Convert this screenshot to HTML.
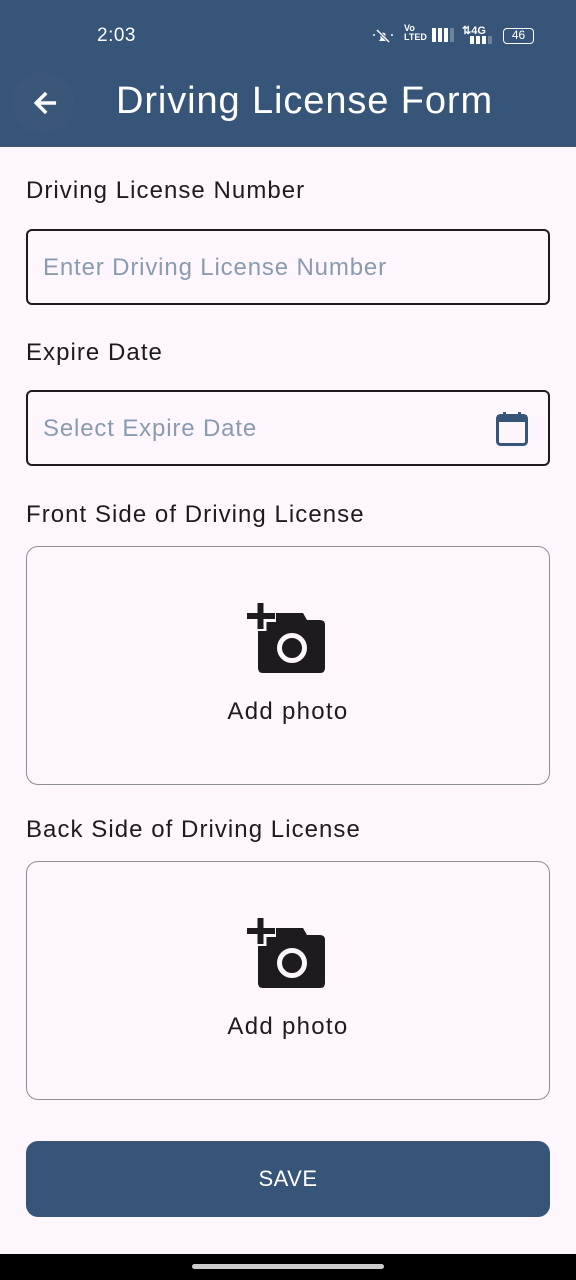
<!DOCTYPE html>
<html><head><meta charset="utf-8"><style>
*{margin:0;padding:0;box-sizing:border-box}
body{width:576px;height:1280px;background:#fdf7fd;font-family:"Liberation Sans",sans-serif;position:relative;overflow:hidden;color:#1d1b20}
.top{position:absolute;left:0;top:0;width:576px;height:147px;background:#375479;color:#fff}
.lbl{position:absolute;left:26px;font-size:24px;color:#1d1b20;letter-spacing:1.05px}
.field{position:absolute;left:26px;width:524px;height:76px;border:2px solid #1d1b20;border-radius:6px;font-size:24px;color:#8a9bb0;padding:23px 0 0 15px;letter-spacing:0.85px}
.box{position:absolute;left:26px;width:524px;height:239px;border:1.5px solid #8e8e95;border-radius:12px}
.box span{position:absolute;left:0;right:0;top:151px;text-align:center;font-size:24px;color:#1d1b20;letter-spacing:1.3px}
</style></head><body>
<div class="top">
<div style="position:absolute;left:97px;top:25px;font-size:19px;letter-spacing:0.5px">2:03</div>
<svg style="position:absolute;left:371px;top:26px" width="24" height="20"><path d="M8 15h8l-1.5-2V8a3 3 0 0 0-5 0v5z" fill="#fff"/><path d="M6 4l12 12" stroke="#375479" stroke-width="3"/><path d="M6 4l12 12" stroke="#fff" stroke-width="1.5"/><path d="M2 9h2M20 9h2" stroke="#fff" stroke-width="1.5"/></svg>
<div style="position:absolute;left:404px;top:24px;font-size:9px;line-height:9px;font-weight:bold">Vo<br>LTED</div>
<div style="position:absolute;left:432px;top:28px;width:22px;height:14px;background:linear-gradient(90deg,#fff 0 4px,transparent 4px 6px,#fff 6px 10px,transparent 10px 12px,#fff 12px 16px,transparent 16px 18px,#6d84a0 18px)"></div>
<div style="position:absolute;left:462px;top:24px;font-size:11px;font-weight:bold">⇅4G</div>
<div style="position:absolute;left:470px;top:36px;width:22px;height:8px;background:linear-gradient(90deg,#fff 0 4px,transparent 4px 6px,#fff 6px 10px,transparent 10px 12px,#fff 12px 16px,transparent 16px 18px,#6d84a0 18px)"></div>
<div style="position:absolute;left:503px;top:28px;width:31px;height:16px;border:1.5px solid #fff;border-radius:4px;font-size:12px;text-align:center;line-height:13px">46</div>
<div style="position:absolute;left:12px;top:72px;width:62px;height:62px;border-radius:50%;background:#3a5679"></div>
<svg style="position:absolute;left:29px;top:87px" width="32" height="32" viewBox="0 0 24 24"><path d="M20 11H7.8l5.6-5.6L12 4l-8 8 8 8 1.4-1.4L7.8 13H20z" fill="#fff" stroke="#fff" stroke-width="0.6"/></svg>
<div style="position:absolute;left:116px;top:80px;font-size:38px;letter-spacing:0.9px">Driving License Form</div>
</div>
<div class="lbl" style="top:177px">Driving License Number</div>
<div class="field" style="top:229px">Enter Driving License Number</div>
<div class="lbl" style="top:339px">Expire Date</div>
<div class="field" style="top:390px">Select Expire Date</div>
<svg style="position:absolute;left:494px;top:410px" width="36" height="38"><rect x="3.5" y="5.5" width="29" height="29" rx="3" fill="none" stroke="#375479" stroke-width="3"/><rect x="3" y="5" width="30" height="7" fill="#375479"/><rect x="9" y="2" width="3" height="6" fill="#375479"/><rect x="24" y="2" width="3" height="6" fill="#375479"/></svg>
<div class="lbl" style="top:501px">Front Side of Driving License</div>
<div class="box" style="top:546px"><span>Add photo</span></div>
<div class="lbl" style="top:816px">Back Side of Driving License</div>
<div class="box" style="top:861px"><span>Add photo</span></div>
<svg style="position:absolute;left:240px;top:598px" width="90" height="80"><g transform="translate(-240,-598)">
<path d="M258 622 Q258 613 266 613 L303 613 L307 620 L320 620 Q325 620 325 625 L325 668 Q325 673 320 673 L263 673 Q258 673 258 668Z" fill="#1d1b20"/>
<path d="M246 616 H276 M260.5 602 V631" stroke="#fdf7fd" stroke-width="12"/>
<path d="M247 616 H275 M260.5 603 V629" stroke="#1d1b20" stroke-width="6"/>
<circle cx="292" cy="648" r="12.5" fill="none" stroke="#fdf7fd" stroke-width="5"/></g></svg>
<svg style="position:absolute;left:240px;top:913px" width="90" height="80"><g transform="translate(-240,-598)">
<path d="M258 622 Q258 613 266 613 L303 613 L307 620 L320 620 Q325 620 325 625 L325 668 Q325 673 320 673 L263 673 Q258 673 258 668Z" fill="#1d1b20"/>
<path d="M246 616 H276 M260.5 602 V631" stroke="#fdf7fd" stroke-width="12"/>
<path d="M247 616 H275 M260.5 603 V629" stroke="#1d1b20" stroke-width="6"/>
<circle cx="292" cy="648" r="12.5" fill="none" stroke="#fdf7fd" stroke-width="5"/></g></svg>
<div style="position:absolute;left:26px;top:1141px;width:524px;height:76px;background:#375479;border-radius:12px;color:#fff;font-size:22px;text-align:center;line-height:76px;letter-spacing:0.5px">SAVE</div>
<div style="position:absolute;left:0;top:1254px;width:576px;height:26px;background:#000"></div>
<div style="position:absolute;left:192px;top:1264px;width:192px;height:5px;border-radius:3px;background:#ccc"></div>
</body></html>
